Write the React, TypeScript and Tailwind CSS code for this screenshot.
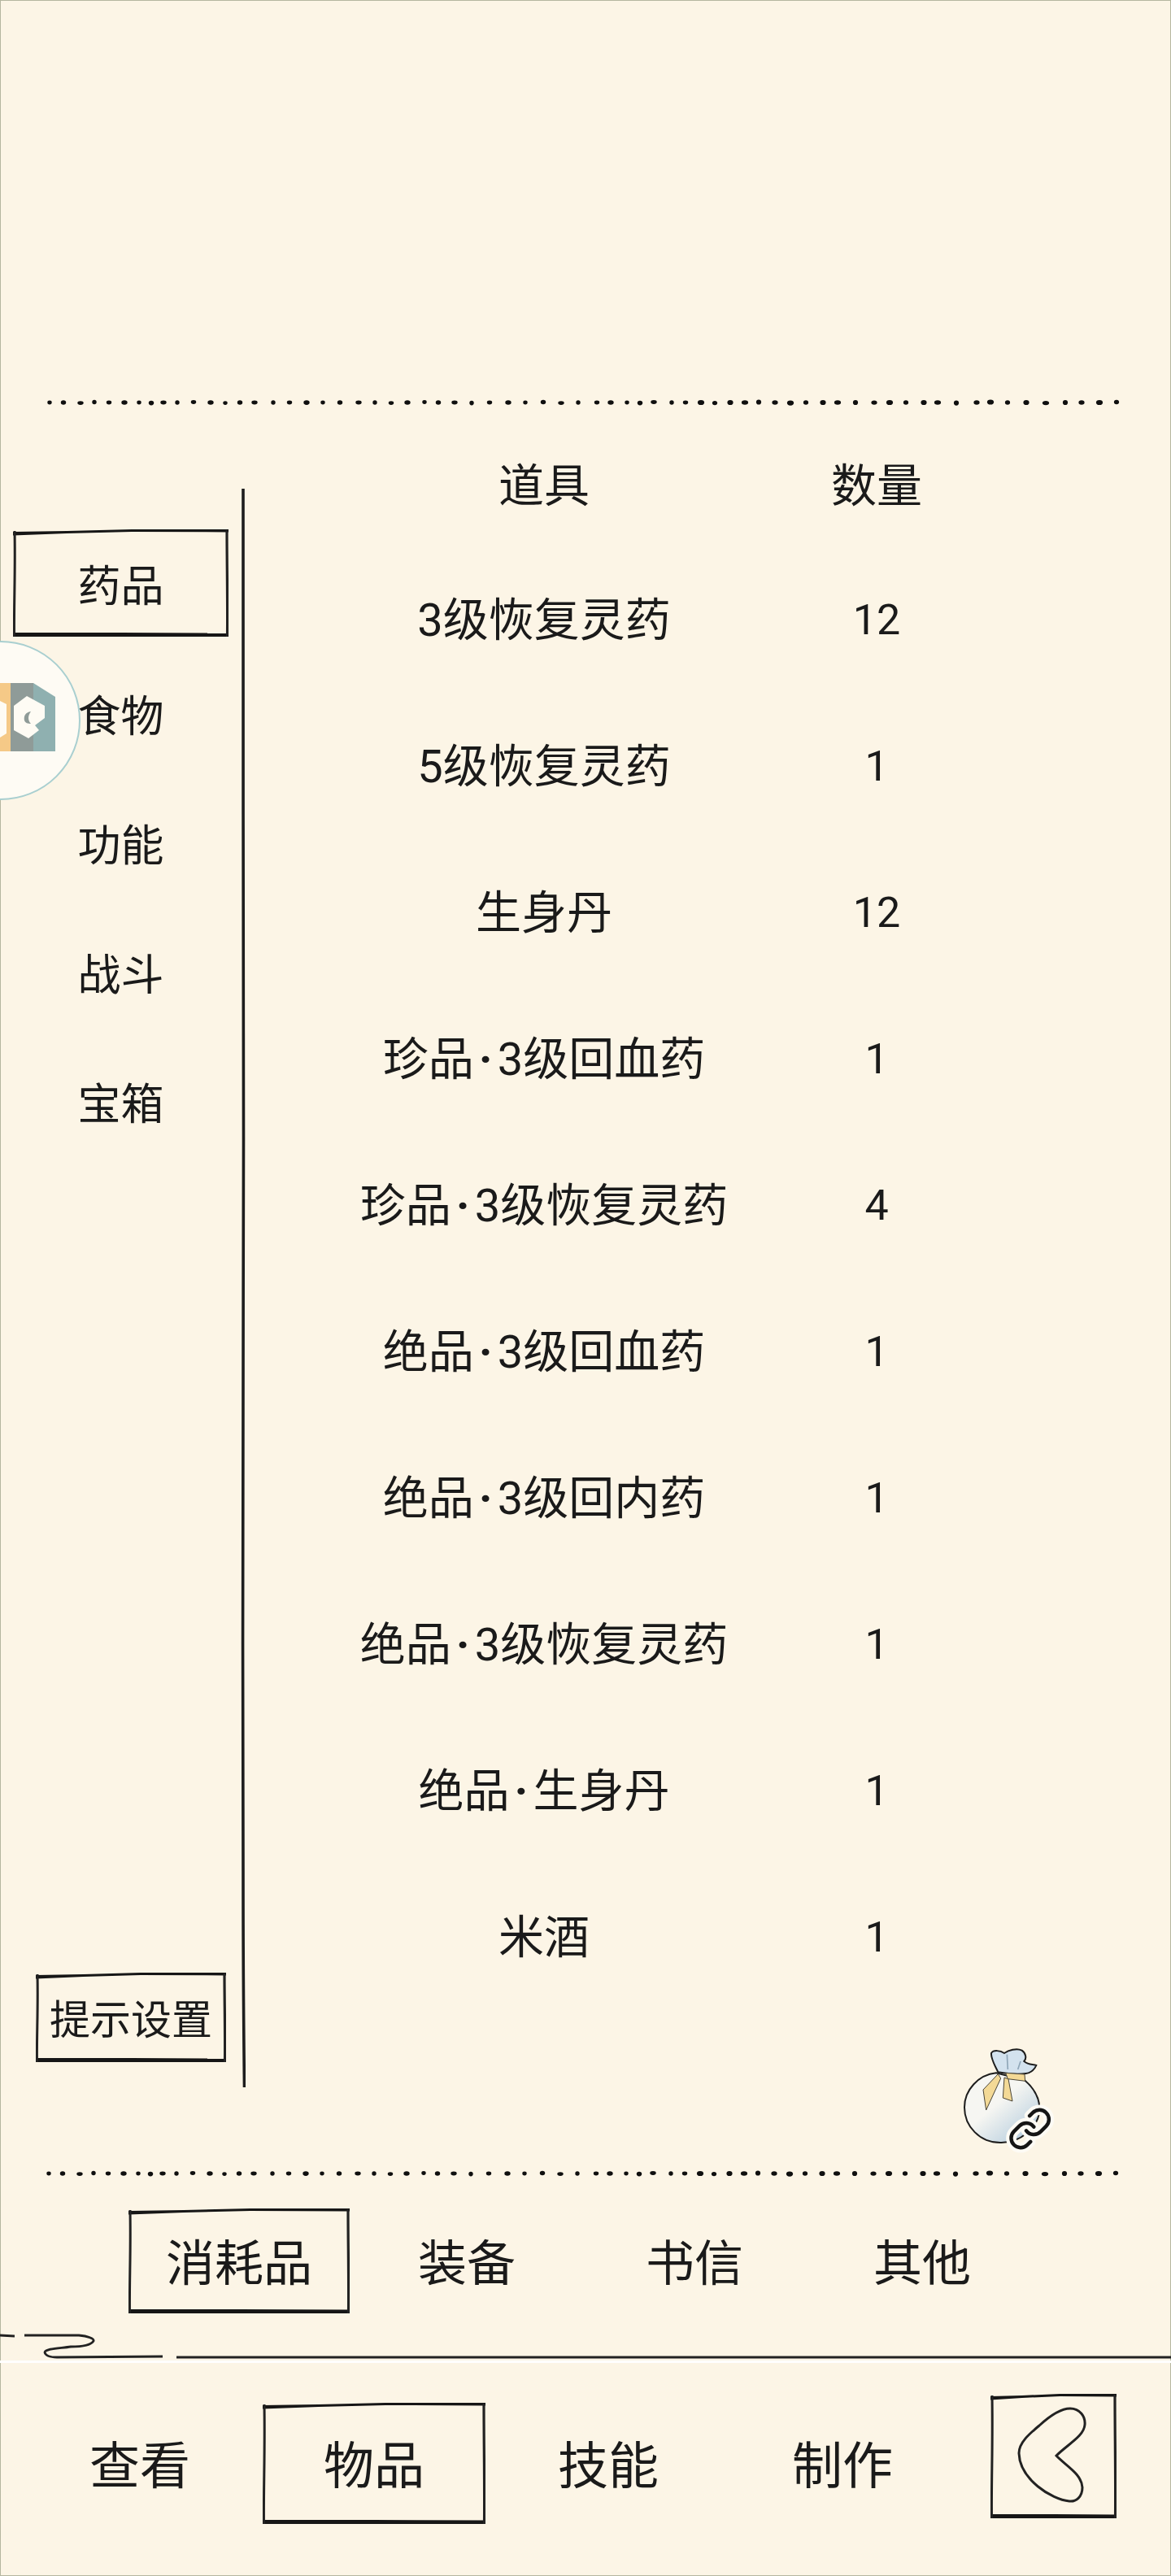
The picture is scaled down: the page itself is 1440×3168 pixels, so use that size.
// App.tsx

const dotXs = [
  60, 77, 98, 115, 133, 152, 170, 185, 200, 217, 237, 258, 276, 294, 312, 335, 355, 376, 396, 417,
  440, 460, 480, 500, 521, 538, 558, 579, 601, 624, 645, 667, 689, 710, 733, 750, 770, 786, 803,
  825, 842, 861, 878, 897, 915, 932, 952, 971, 990, 1011, 1029, 1051, 1074, 1093, 1113, 1135, 1152,
  1175, 1200, 1217, 1238, 1261, 1285, 1309, 1329, 1351, 1372,
];

const sideItems = ["食物", "功能", "战斗", "宝箱"];

const rows = [
  { name: "3级恢复灵药", count: 12 },
  { name: "5级恢复灵药", count: 1 },
  { name: "生身丹", count: 12 },
  { name: "珍品·3级回血药", count: 1 },
  { name: "珍品·3级恢复灵药", count: 4 },
  { name: "绝品·3级回血药", count: 1 },
  { name: "绝品·3级回内药", count: 1 },
  { name: "绝品·3级恢复灵药", count: 1 },
  { name: "绝品·生身丹", count: 1 },
  { name: "米酒", count: 1 },
];

function DotLine({ shift }: { shift: number }) {
  return (
    <svg className="block h-[12px] w-[1440px] shrink-0" viewBox="0 0 1440 12">
      {dotXs.map((x, i) => (
        <ellipse
          key={x}
          cx={x + shift}
          cy={6 + (i % 5 === 2 ? 0.6 : 0) - (i % 7 === 3 ? 0.5 : 0)}
          rx={2.7 + (i % 3) * 0.5 + (i > 40 ? 0.4 : 0)}
          ry={2.4 + (i % 2) * 0.4 + (i > 40 ? 0.3 : 0)}
          fill="#0f0f0f"
        />
      ))}
    </svg>
  );
}

// hand drawn rectangle, thick at the top left like the original brush frames
function SketchBox({
  w,
  h,
  className,
  children,
}: {
  w: number;
  h: number;
  className: string;
  children?: React.ReactNode;
}) {
  const top = `0,3 ${w * 0.25},2 ${w * 0.55},0 ${w},0 ${w},3.4 ${w * 0.55},3 ${w * 0.25},5 0,7.5`;
  const bottom = `0,${h - 5} ${w * 0.5},${h - 5} ${w},${h - 4.5} ${w + 1},${h} 0,${h}`;
  return (
    <div className={"relative flex items-center justify-center " + className}>
      <svg className="absolute inset-0 h-full w-full" viewBox={`0 0 ${w} ${h}`}>
        <polygon points={top} fill="#161616" />
        <polygon points={bottom} fill="#161616" />
        <path d={`M2 2 C3 ${h * 0.4} 1 ${h * 0.7} 1.5 ${h}`} stroke="#222" strokeWidth="3" fill="none" />
        <path
          d={`M${w - 2} 1 C${w - 2} ${h * 0.3} ${w - 1} ${h * 0.7} ${w - 1.5} ${h}`}
          stroke="#222"
          strokeWidth="3.2"
          fill="none"
        />
      </svg>
      {children}
    </div>
  );
}

function ItemName({ name }: { name: string }) {
  const parts = name.split("·");
  if (parts.length < 2) return <>{name}</>;
  return (
    <>
      {parts[0]}
      <span className="mx-[6px] font-bold">·</span>
      {parts[1]}
    </>
  );
}

function Bag() {
  const link = (
    <>
      <path d="M10 13a5 5 0 0 0 7.54.54l3-3a5 5 0 0 0-7.07-7.07l-1.72 1.71" />
      <path d="M14 11a5 5 0 0 0-7.54-.54l-3 3a5 5 0 0 0 7.07 7.07l1.71-1.71" />
    </>
  );
  return (
    <svg className="absolute left-[1140px] top-[2490px] h-[170px] w-[180px]" viewBox="0 0 540 510">
      <defs>
        <linearGradient id="bagFill" x1="0.2" y1="0.2" x2="0.85" y2="0.9">
          <stop offset="0.35" stopColor="#f6f6f2" />
          <stop offset="1" stopColor="#b9cfdf" />
        </linearGradient>
      </defs>
      <path
        d="M255 178 L360 205 C395 235 415 270 415 310 C415 380 340 437 270 435 C195 435 138 375 138 305 C138 240 190 185 255 178Z"
        fill="url(#bagFill)"
        stroke="#1d1d1d"
        strokeWidth="6"
      />
      <path
        d="M262 175 C250 150 235 125 237 105 C245 92 270 95 285 105 C300 95 330 85 350 95 C365 105 368 125 358 135 C375 150 390 145 403 150 C395 170 375 180 365 180 C330 185 290 180 262 175Z"
        fill="#d3e2ee"
        stroke="#1d1d1d"
        strokeWidth="6"
      />
      <path d="M295 110 L298 165 M345 135 L335 165" stroke="#8fa6b8" strokeWidth="5" fill="none" />
      <path d="M262 182 L207 240 L218 315 L272 198Z" fill="#f3d996" stroke="#4a4538" strokeWidth="3" />
      <path d="M285 195 L280 270 L315 282 L300 200Z" fill="#f3d996" stroke="#4a4538" strokeWidth="3" />
      <path d="M290 178 L360 183 L362 208 L298 200Z" fill="#f3d996" stroke="#4a4538" strokeWidth="3" />
      <g transform="translate(296 300) scale(7)" fill="none" strokeLinecap="round" strokeLinejoin="round">
        <g stroke="#fdfbf5" strokeWidth="5.4">{link}</g>
        <g stroke="#151515" strokeWidth="1.9">{link}</g>
      </g>
    </svg>
  );
}

function FloatBall() {
  return (
    <div className="absolute left-[-97px] top-[788px] h-[196px] w-[196px] rounded-full border-2 border-[#a9cfd0] bg-[#fefbf4]">
      <svg className="absolute left-[95px] top-[50px] h-[90px] w-[70px]" viewBox="0 840 70 90">
        <rect x="0" y="840" width="13" height="84" fill="#f5c987" />
        <path d="M13 840 H41 V924 H13Z" fill="#8f9b98" />
        <path d="M41 840 L68 857 V924 H41Z" fill="#8fb0b0" />
        <path d="M0 862 L8 866 V902 L0 907Z" fill="#fefbf4" />
        <path
          d="M33 856 L55 868 V883 L43 892 L48 898 L35 908 L17 898 V868Z"
          fill="#fefbf4"
        />
        <path d="M38 875 C31 876 29 881 30 886 C31 889 34 890 38 890 C34 886 34 880 38 875Z" fill="#8f9b98" />
      </svg>
    </div>
  );
}

export default function App() {
  return (
    <div className="relative flex h-[3168px] w-[1440px] flex-col overflow-hidden whitespace-nowrap bg-[#fcf5e6] text-[#1a1a1a] shadow-[inset_0_0_0_1px_#b5b6a0] [font-family:Roboto,'Noto_Sans_CJK_SC',sans-serif]">
      <div className="h-[489px] shrink-0" />

      <DotLine shift={1} />

      {/* Main area */}
      <main className="flex h-[2166px] shrink-0">
        <aside className="flex h-[1966px] w-[296px] shrink-0 translate-y-[100px] flex-col">
          <SketchBox w={265} h={132} className="ml-[16px] mt-[50px] h-[132px] w-[265px] pt-[12px] text-[53px]">
            药品
          </SketchBox>
          <div className="mt-[16px]">
            {sideItems.map((item) => (
              <div key={item} className="flex h-[159px] w-[297px] items-center justify-center pt-[8px] text-[53px]">
                {item}
              </div>
            ))}
          </div>
          <SketchBox w={234} h={110} className="mb-[31px] ml-[44px] mt-auto h-[110px] w-[234px] pt-[8px] text-[50px]">
            提示设置
          </SketchBox>
        </aside>

        <svg className="mt-[100px] h-[1966px] w-[6px] shrink-0" viewBox="0 0 6 1966">
          <path
            d="M3 0 C2 300 4 500 3.5 800 C3 1100 2 1400 3 1700 C3 1850 4 1920 4.5 1966"
            stroke="#1d1d1d"
            strokeWidth="3.6"
            fill="none"
          />
        </svg>

        {/* Item table */}
        <section className="pt-[50px]">
          <div className="grid h-[122px] grid-cols-[734px_84px] pb-[28px] text-[56px]">
            <div className="flex items-center justify-center">道具</div>
            <div className="flex items-center justify-center">数量</div>
          </div>
          {rows.map((row) => (
            <div key={row.name} className="grid h-[180px] grid-cols-[734px_84px] text-[56px]">
              <div className="flex items-center justify-center">
                <span>
                  <ItemName name={row.name} />
                </span>
              </div>
              <div className="flex items-center justify-center text-[52px]">{row.count}</div>
            </div>
          ))}
        </section>
      </main>

      <DotLine shift={0} />

      {/* Sub tabs */}
      <div className="flex h-[191px] shrink-0 items-start pl-[154px] pt-[37px] text-[60px]">
        <div className="flex w-[280px] justify-center">
          <SketchBox w={272} h={129} className="h-[129px] w-[272px] pt-[8px]">
            消耗品
          </SketchBox>
        </div>
        <div className="flex h-[129px] w-[280px] items-center justify-center pt-[8px]">装备</div>
        <div className="flex h-[129px] w-[280px] items-center justify-center pt-[8px]">书信</div>
        <div className="flex h-[129px] w-[280px] items-center justify-center pt-[8px]">其他</div>
      </div>

      <svg className="block h-[40px] w-[1440px] shrink-0" viewBox="0 0 1440 40">
        <rect x="0" y="33" width="1440" height="3" fill="#ffffff" />
        <path
          d="M0 2 L18 3 M30 2 L97 2 C108 3 116 6 115 9 C112 14 100 16 87 16 C75 18 56 18 55 23 C56 27 62 29 70 29 L200 28 M217 29 C500 28 800 31 1100 29 C1250 28 1350 30 1440 29"
          stroke="#222"
          strokeWidth="2.8"
          fill="none"
        />
      </svg>

      {/* Bottom nav */}
      <nav className="flex grow items-start pl-[28px] pt-[45px] text-[62px]">
        <div className="flex h-[149px] w-[288px] items-center justify-center pt-[8px]">查看</div>
        <div className="flex w-[288px] justify-center">
          <SketchBox w={274} h={149} className="h-[149px] w-[274px] pt-[8px]">
            物品
          </SketchBox>
        </div>
        <div className="flex h-[149px] w-[288px] items-center justify-center pt-[8px]">技能</div>
        <div className="flex h-[149px] w-[288px] items-center justify-center pt-[8px]">制作</div>
        <SketchBox w={155} h={153} className="-mt-[11px] ml-[38px] h-[153px] w-[155px]">
          <svg className="absolute inset-0 h-full w-full" viewBox="0 0 155 153">
            <path
              d="M60 39 C72 28 85 18 98 18 C110 18 117 28 116 38 C115 52 95 62 81 76 C92 88 112 98 113 115 C113 127 105 133 97 132 C75 130 36 105 35 73 C35 60 48 49 60 39Z"
              stroke="#222"
              strokeWidth="3"
              fill="none"
            />
          </svg>
        </SketchBox>
      </nav>

      <FloatBall />
      <Bag />
    </div>
  );
}
